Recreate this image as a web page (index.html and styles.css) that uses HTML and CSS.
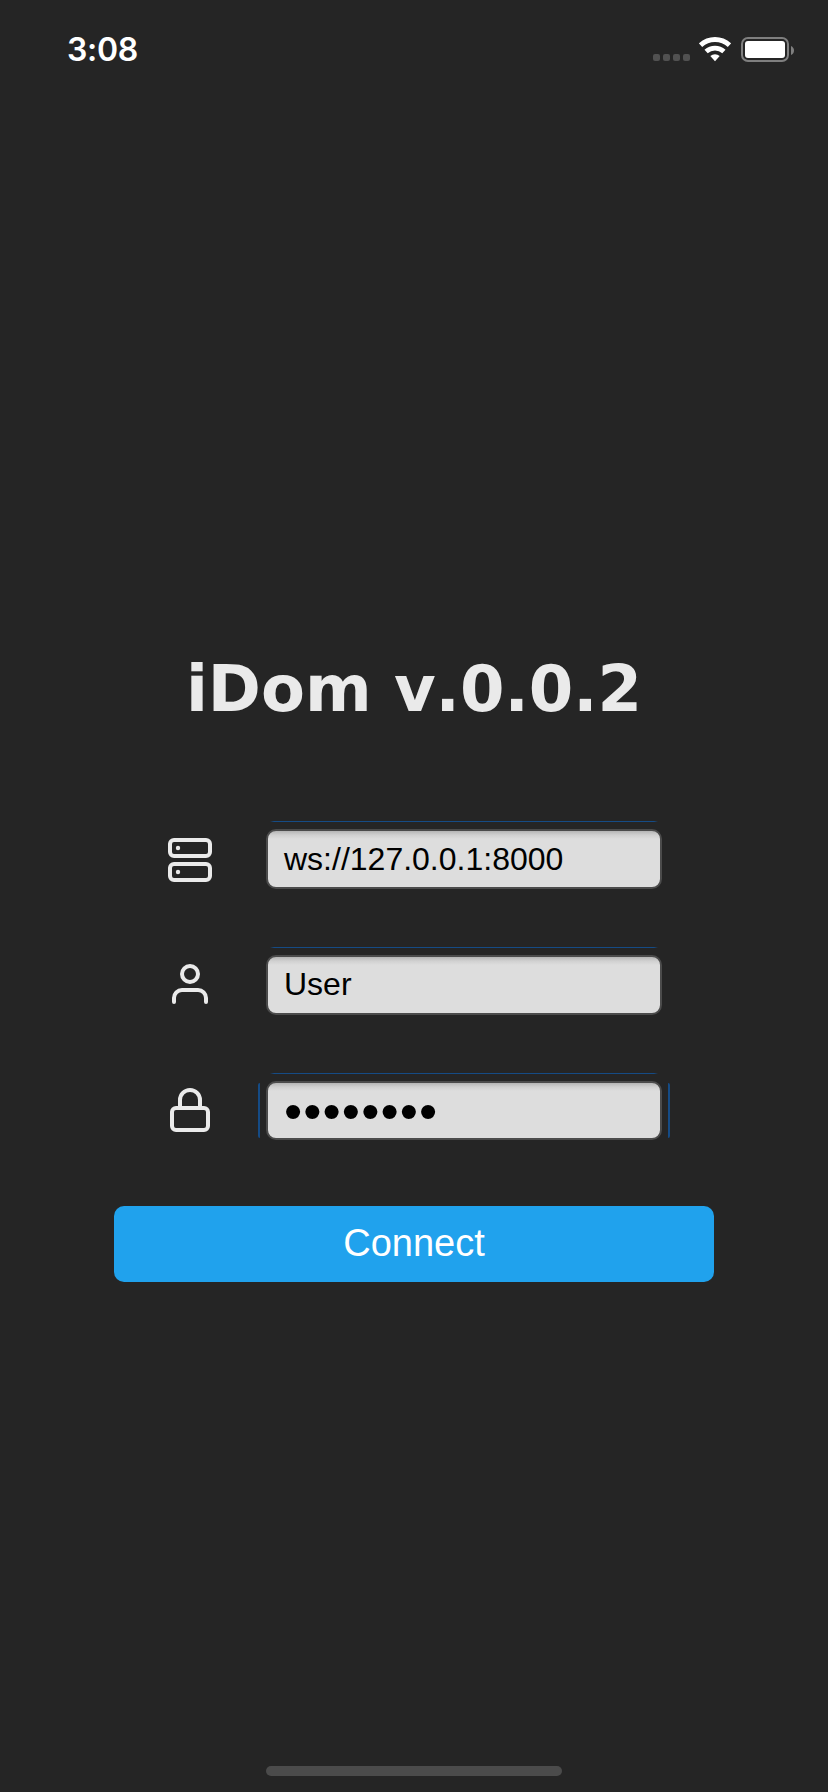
FILE: index.html
```html
<!DOCTYPE html>
<html lang="en">
<head>
<meta charset="utf-8">
<title>iDom</title>
<link rel="stylesheet" href="styles.css">
</head>
<body>
<div class="screen">
  <header class="status">
    <span class="time">3:08</span>
    <div class="indicators">
      <div class="signal"><i></i><i></i><i></i><i></i></div>
      <svg class="wifi" width="32" height="25" viewBox="0 0 32 25">
        <g fill="none" stroke="#fff">
          <path d="M1.55 8.1A21.6 21.6 0 0 1 30.45 8.1" stroke-width="5"/>
          <path d="M7.1 14.5A13.2 13.2 0 0 1 24.9 14.5" stroke-width="4.8"/>
        </g>
        <path d="M11.3 19A7 7 0 0 1 20.7 19L16 24.2Z" fill="#fff"/>
      </svg>
      <div class="battery"><div class="level"></div></div>
      <svg class="nub" width="3" height="9" viewBox="0 0 3 9"><path d="M0 0Q3 1.5 3 4.5T0 9Z" fill="#7f7f7f"/></svg>
    </div>
  </header>
  <main class="login">
    <h1 class="title">iDom v.0.0.2</h1>
    <form class="form">
      <div class="row">
        <svg class="icon" width="48" height="48" viewBox="0 0 48 48">
          <rect x="4" y="4" width="40" height="16" rx="4"/>
          <rect x="4" y="28" width="40" height="16" rx="4"/>
          <circle class="dot" cx="12" cy="12" r="2.2"/>
          <circle class="dot" cx="12" cy="36" r="2.2"/>
        </svg>
        <div class="field"><span class="value">ws://127.0.0.1:8000</span></div>
      </div>
      <div class="row">
        <svg class="icon" width="48" height="48" viewBox="0 0 48 48">
          <circle cx="24" cy="12" r="8"/>
          <path d="M8 40V36A8 8 0 0 1 16 28H32A8 8 0 0 1 40 36V40"/>
        </svg>
        <div class="field field-user"><span class="value">User</span></div>
      </div>
      <div class="row row-secret">
        <svg class="icon" width="48" height="48" viewBox="0 0 48 48">
          <rect x="6" y="22" width="36" height="22" rx="4"/>
          <path d="M14 22V14A10 10 0 0 1 34 14V22"/>
        </svg>
        <div class="field field-secret"><span class="value secret">••••••••</span></div>
      </div>
      <button class="connect" type="button">Connect</button>
    </form>
  </main>
  <footer class="home"><div class="home-bar"></div></footer>
</div>
</body>
</html>
```

FILE: styles.css
```css
* { box-sizing: border-box; }
body { margin: 0; background: #252525; }
.screen {
  width: 828px;
  height: 1792px;
  display: flex;
  flex-direction: column;
  background: #252525;
  overflow: hidden;
}
.status {
  height: 100px;
  flex: none;
  display: flex;
  justify-content: space-between;
  align-items: center;
  padding: 0 34px 0 67px;
}
.time {
  color: #fff;
  font: 600 32px/40px Inter, sans-serif;
  letter-spacing: -0.3px;
}
.indicators { display: flex; align-items: center; margin-bottom: 1px; }
.signal { display: flex; gap: 3px; margin: 16px 9px 0 0; }
.signal i { width: 7px; height: 7px; border-radius: 2px; background: #515151; }
.wifi { display: block; margin-right: 10px; }
.battery {
  width: 48px;
  height: 25px;
  padding: 2px;
  border: 2px solid #7f7f7f;
  border-radius: 7px;
}
.level { height: 17px; border-radius: 3px; background: #fff; }
.nub { display: block; margin: 1px 0 0 2px; }
.login { flex: 1; padding: 549px 114px 0; }
.title {
  margin: 0;
  height: 80px;
  color: #eaeaea;
  text-align: center;
  white-space: nowrap;
  font: bold 64px/80px "DejaVu Sans", sans-serif;
  font-kerning: none;
}
.form {
  display: flex;
  flex-direction: column;
  gap: 66px;
  margin-top: 100px;
}
.row { height: 60px; display: flex; align-items: flex-start; padding-left: 52px; }
.row-secret { height: 59px; }
.icon {
  display: block;
  margin: 7px 52px 0 0;
  fill: none;
  stroke: #eaeaea;
  stroke-width: 4;
  stroke-linecap: round;
  stroke-linejoin: round;
}
.row-secret .icon { margin-top: 5px; }
.icon .dot { fill: #eaeaea; stroke: none; }
.field {
  position: relative;
  width: 396px;
  height: 60px;
  display: flex;
  align-items: center;
  padding-left: 16px;
  border: 2px solid #4b4b4b;
  border-radius: 10px;
  background: linear-gradient(#b5b5b5, #d0d0d0 4px, #ddd 8px);
}
.field::before {
  content: "";
  position: absolute;
  left: 2px;
  right: 2px;
  top: -10px;
  height: 1px;
  background: linear-gradient(90deg, transparent, #154b85 4px calc(100% - 4px), transparent);
}
.field-user { padding-bottom: 2px; }
.field-secret { height: 59px; }
.field-secret::after {
  content: "";
  position: absolute;
  left: -10px;
  right: -10px;
  top: 0;
  height: 55px;
  border: solid #154b85;
  border-width: 0 2px;
  border-radius: 2px;
}
.value { color: #000; font: 32px/40px "Liberation Sans", Arial, sans-serif; }
.secret { font-size: 52px; letter-spacing: 1.08px; }
.connect {
  width: 600px;
  height: 76px;
  padding: 0 0 2px;
  border: 0;
  border-radius: 10px;
  background: #20a2ed;
  color: #fff;
  font: 38px/44px "Liberation Sans", Arial, sans-serif;
}
.home { height: 26px; flex: none; display: flex; justify-content: center; }
.home-bar { width: 296px; height: 10px; border-radius: 5px; background: #4b4b4b; }
```
